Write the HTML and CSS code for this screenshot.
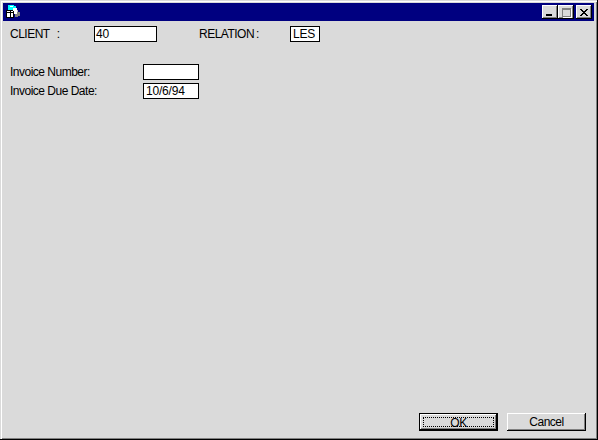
FILE: index.html
```html
<!DOCTYPE html>
<html lang="en">
<head>
<meta charset="utf-8">
<title>Invoice</title>
<link rel="stylesheet" href="styles.css">
</head>
<body>
<div class="window">
  <div class="titlebar">
    <svg class="appicon" width="16" height="16" viewBox="0 0 16 16" shape-rendering="crispEdges">
      <path fill="#808080" d="M11 8h5v4h-2v1h-3z"/>
      <path fill="#c0c0c0" d="M11 6h3v2h-3z"/>
      <path fill="#00ffff" d="M4 1h6v1h2v4H4z"/>
      <path fill="#ffffff" d="M6 2h3v1H6zM9 4h4v6H9z"/>
      <path fill="#000000" d="M2 6h7v1h1v7H2z"/>
      <path fill="#ffffff" d="M3 7h3v1H3zM7 7h2v1H7zM3 9h3v4H3zM7 9h2v4H7z"/>
    </svg>
    <div class="winbtns">
      <div class="winbtn"><span class="glyph-min"></span></div>
      <div class="winbtn"><span class="glyph-max"></span></div>
      <div class="winbtn close">
        <svg width="8" height="7" viewBox="0 0 8 7" shape-rendering="crispEdges"><path fill="#000" d="M0 0h2v1h1v1h2V1h1V0h2v1H7v1H6v1H5v1h1v1h1v1h1v1H6V6H5V5H3v1H2v1H0V6h1V5h1V4h1V3H2V2H1V1H0z"/></svg>
      </div>
    </div>
  </div>
  <div class="content">
    <div class="toprow">
      <span class="label client">CLIENT&nbsp;&nbsp; :</span>
      <div class="field f-client">40</div>
      <span class="label relation">RELATION :</span>
      <div class="field f-relation">LES</div>
    </div>
    <div class="invoice">
      <div class="row">
        <span class="label inv">Invoice Number:</span>
        <div class="field f-inv"></div>
      </div>
      <div class="row">
        <span class="label inv">Invoice Due Date:</span>
        <div class="field f-inv">10/6/94</div>
      </div>
    </div>
    <div class="actions">
      <button class="btn default" type="button"><span class="focus">OK</span></button>
      <button class="btn" type="button">Cancel</button>
    </div>
  </div>
</div>
</body>
</html>
```
FILE: styles.css
```css
* { box-sizing: border-box; }
html, body { margin: 0; padding: 0; }
body {
  width: 598px;
  height: 440px;
  overflow: hidden;
  font-family: "Liberation Sans", Arial, sans-serif;
  font-size: 12px;
  letter-spacing: -0.5px;
  color: #000;
  background: #dadada;
}
.window {
  width: 598px;
  height: 440px;
  display: flex;
  flex-direction: column;
  background: #dadada;
  border-right: 1px solid #000;
  border-bottom: 1px solid #000;
  box-shadow: inset 1px 1px 0 #dadada, inset 2px 2px 0 #fff, inset -1px -1px 0 #808080;
  padding: 3px;
}
.titlebar {
  height: 18px;
  flex: none;
  background: #000080;
  display: flex;
  align-items: center;
  justify-content: space-between;
  padding: 0 2px 0 1px;
}
.appicon { display: block; }
.winbtns { display: flex; }
.winbtn {
  width: 16px;
  height: 14px;
  background: #dadada;
  display: flex;
  align-items: center;
  justify-content: center;
  box-shadow: inset -1px -1px 0 #000, inset 1px 1px 0 #fff, inset -2px -2px 0 #808080;
}
.winbtn.close { margin-left: 2px; }
.glyph-min { width: 6px; height: 2px; background: #000; margin: 6px 3px 0 0; }
.glyph-max {
  width: 9px;
  height: 9px;
  border: 1px solid #808080;
  border-top-width: 2px;
  box-shadow: 1px 1px 0 #fff;
}
.content {
  flex: 1;
  display: flex;
  flex-direction: column;
  padding: 5px 0 5px 7px;
}
.toprow { display: flex; align-items: center; height: 16px; }
.label { white-space: nowrap; }
.client { width: 84px; word-spacing: -0.5px; }
.relation { width: 91px; margin-left: 42px; word-spacing: -1px; }
.field {
  height: 16px;
  background: #fff;
  border: 1px solid #000;
  padding-left: 2px;
  line-height: 14px;
  white-space: nowrap;
  letter-spacing: -0.2px;
}
.f-client { width: 63px; padding-left: 1px; }
.f-relation { width: 30px; }
.f-inv { width: 56px; }
.invoice {
  display: flex;
  flex-direction: column;
  gap: 3px;
  margin-top: 22px;
}
.row { display: flex; align-items: center; }
.inv { width: 133px; }
.actions {
  margin-top: auto;
  display: flex;
  justify-content: flex-end;
  gap: 9px;
  padding-right: 8px;
}
.btn {
  width: 79px;
  height: 18px;
  padding: 0;
  border: 0;
  background: #dadada;
  font: inherit;
  letter-spacing: -0.5px;
  color: #000;
  box-shadow: inset -1px -1px 0 #000, inset 1px 1px 0 #fff, inset -2px -2px 0 #808080;
  display: flex;
  align-items: center;
  justify-content: center;
}
.btn.default {
  border: 1px solid #000;
  padding: 3px;
}
.focus {
  display: block;
  width: 100%;
  height: 100%;
  line-height: 10px;
  text-align: center;
  border: 1px dotted #000;
}
```
